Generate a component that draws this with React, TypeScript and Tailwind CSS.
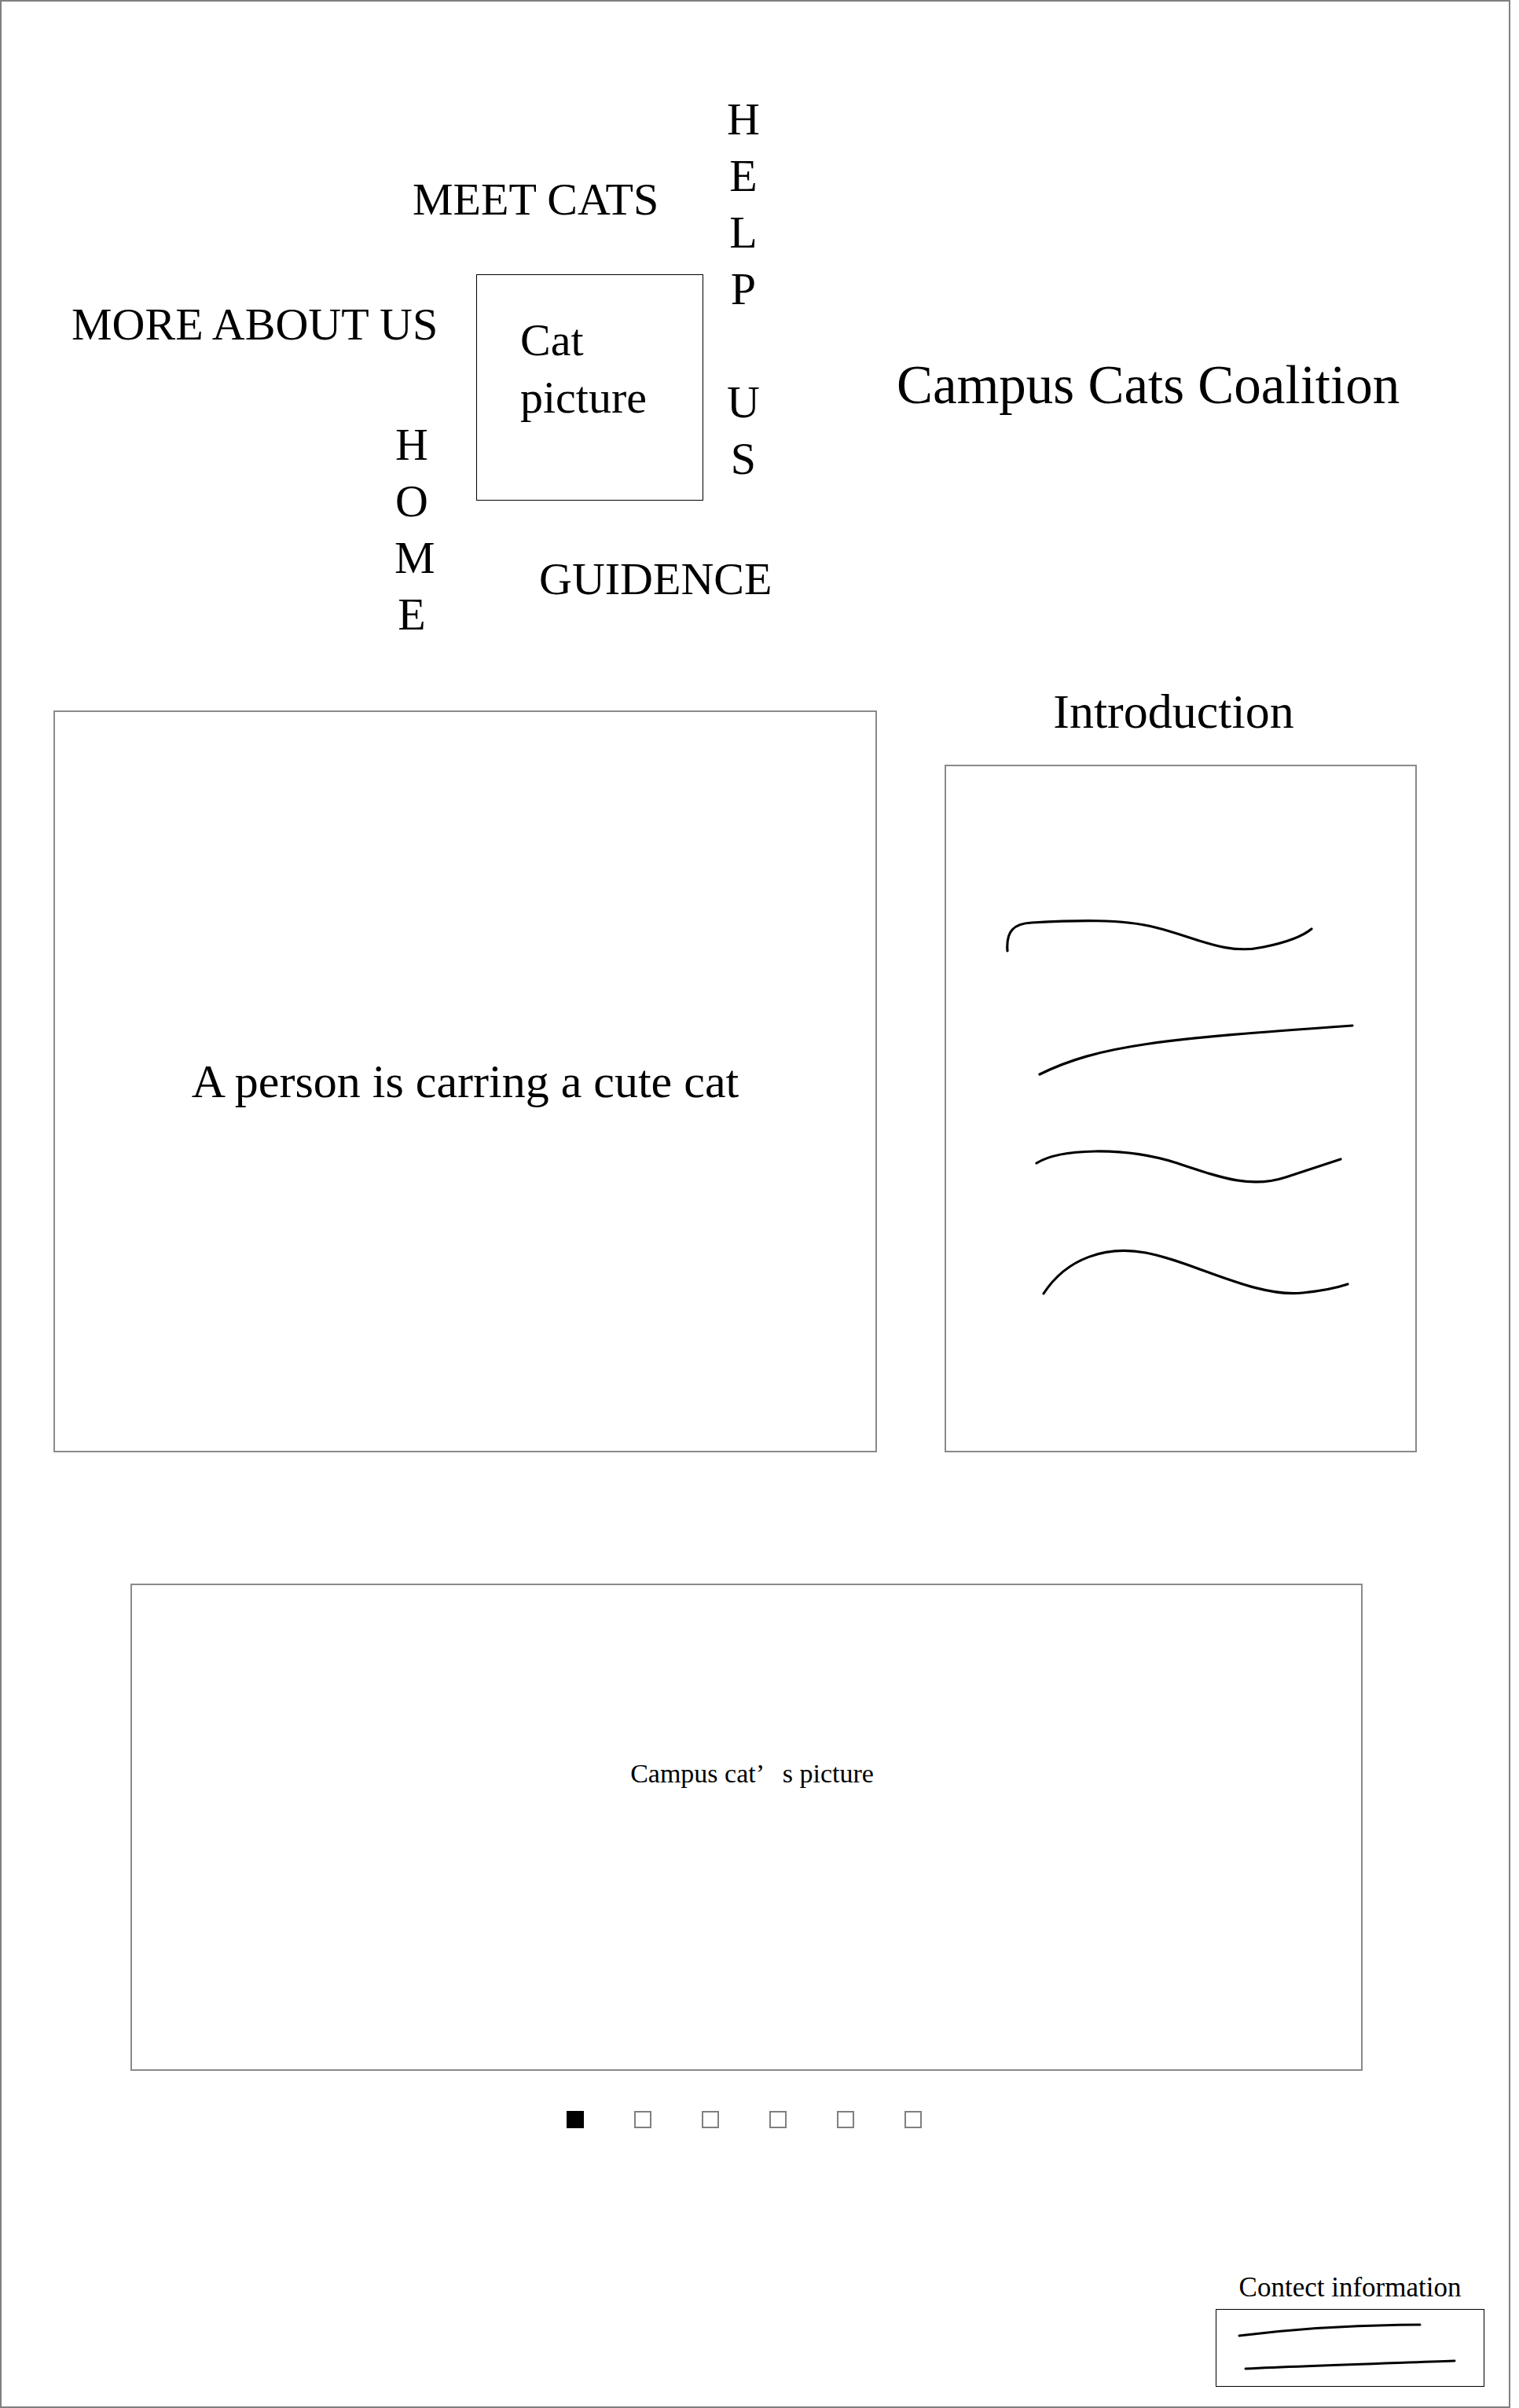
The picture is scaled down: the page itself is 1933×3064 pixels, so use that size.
const serif = "font-['Liberation_Serif','Times_New_Roman',serif]";

function Stack({ letters, className }: { letters: string[]; className?: string }) {
  return (
    <div className={`flex flex-col text-center text-[58px] leading-[72px] ${className ?? ""}`}>
      {letters.map((l, i) =>
        l === " " ? <div key={i} className="h-[72px]" /> : <div key={i}>{l}</div>
      )}
    </div>
  );
}

function Header() {
  return (
    <div className="flex pl-[89px] text-[58px] leading-[72px] text-black">
      {/* left column */}
      <div className="flex w-[469px] flex-col">
        <div className="mt-[375px] whitespace-nowrap">MORE ABOUT US</div>
        <Stack letters={["H", "O", "M", "E"]} className="mt-[81px] mr-[14px] w-[44px] self-end" />
      </div>

      {/* middle column */}
      <div className="flex w-[365px] flex-col">
        <div className="mt-[216px] -ml-[35px] whitespace-nowrap">MEET CATS</div>
        <div className="mt-[59px] ml-[46px] h-[288px] w-[289px] border border-black pl-[55px] pt-[46px] leading-[73px]">
          <div>Cat</div>
          <div>picture</div>
        </div>
        <div className="mt-[64px] ml-[126px] whitespace-nowrap">GUIDENCE</div>
      </div>

      {/* right column */}
      <Stack letters={["H", "E", "L", "P", " ", "U", "S"]} className="mt-[114px] w-[42px]" />

      <div className="mt-[448px] ml-[174px] whitespace-nowrap text-[69px] leading-[80px]">
        Campus Cats Coalition
      </div>
    </div>
  );
}

function Intro() {
  return (
    <div className="flex w-[601px] flex-col">
      <div className="pr-[18px] text-center text-[62px] leading-[72px]">Introduction</div>
      <div className="mt-[32px] h-[875px] w-[601px] border-2 border-[#8a8a8a]">
        <svg viewBox="0 0 597 871" className="h-full w-full" fill="none" stroke="black" strokeWidth="3.2" strokeLinecap="round">
          <path d="M 78 235 C 76 210, 86 200, 109 199 C 164 196, 224 194, 266 205 C 316 217, 356 241, 404 230 C 434 224, 454 216, 465 207" />
          <path d="M 119 392 C 194 355, 274 347, 517 330" />
          <path d="M 115 505 C 144 487, 224 483, 294 505 C 354 525, 389 537, 432 523 L 502 500" />
          <path d="M 124 671 C 154 625, 204 610, 254 619 C 314 630, 394 677, 454 670 C 484 667, 499 663, 511 659" />
        </svg>
      </div>
    </div>
  );
}

export default function App() {
  return (
    <div className={`h-[3064px] w-[1922px] border-2 border-[#808080] bg-white text-black ${serif}`}>
      <Header />

      <div className="mt-[51px] flex items-end gap-[86px] pl-[66px]">
        <div className="flex h-[944px] w-[1048px] items-center justify-center border-2 border-[#8a8a8a] text-[60px] leading-[72px]">
          A person is carring a cute cat
        </div>
        <Intro />
      </div>

      <div className="mt-[167px] ml-[164px] w-[1568px]">
        <div className="h-[620px] border-2 border-[#8a8a8a] pt-[220px] pl-[14px] text-center text-[34px] leading-[40px]">
          Campus cat<span className="inline-block w-[1em] text-left">’</span>s picture
        </div>
        <div className="mt-[51px] flex justify-center gap-[64px] pr-[6px]">
          <div className="h-[22px] w-[22px] bg-black" />
          {[0, 1, 2, 3, 4].map((i) => (
            <div key={i} className="h-[22px] w-[22px] border-2 border-[#808080]" />
          ))}
        </div>
      </div>

      <div className="mt-[183px] flex justify-end pr-[31px]">
        <div className="flex w-[342px] flex-col items-center">
          <div className="text-[35px] leading-[40px] whitespace-nowrap">Contect information</div>
          <div className="mt-[7px] h-[99px] w-[342px] border border-black">
            <svg viewBox="0 0 340 97" className="h-full w-full" fill="none" stroke="black" strokeWidth="3" strokeLinecap="round">
              <path d="M 29 33 C 100 24, 180 19, 259 19" />
              <path d="M 37 75 C 120 71, 220 68, 303 65" />
            </svg>
          </div>
        </div>
      </div>
    </div>
  );
}
